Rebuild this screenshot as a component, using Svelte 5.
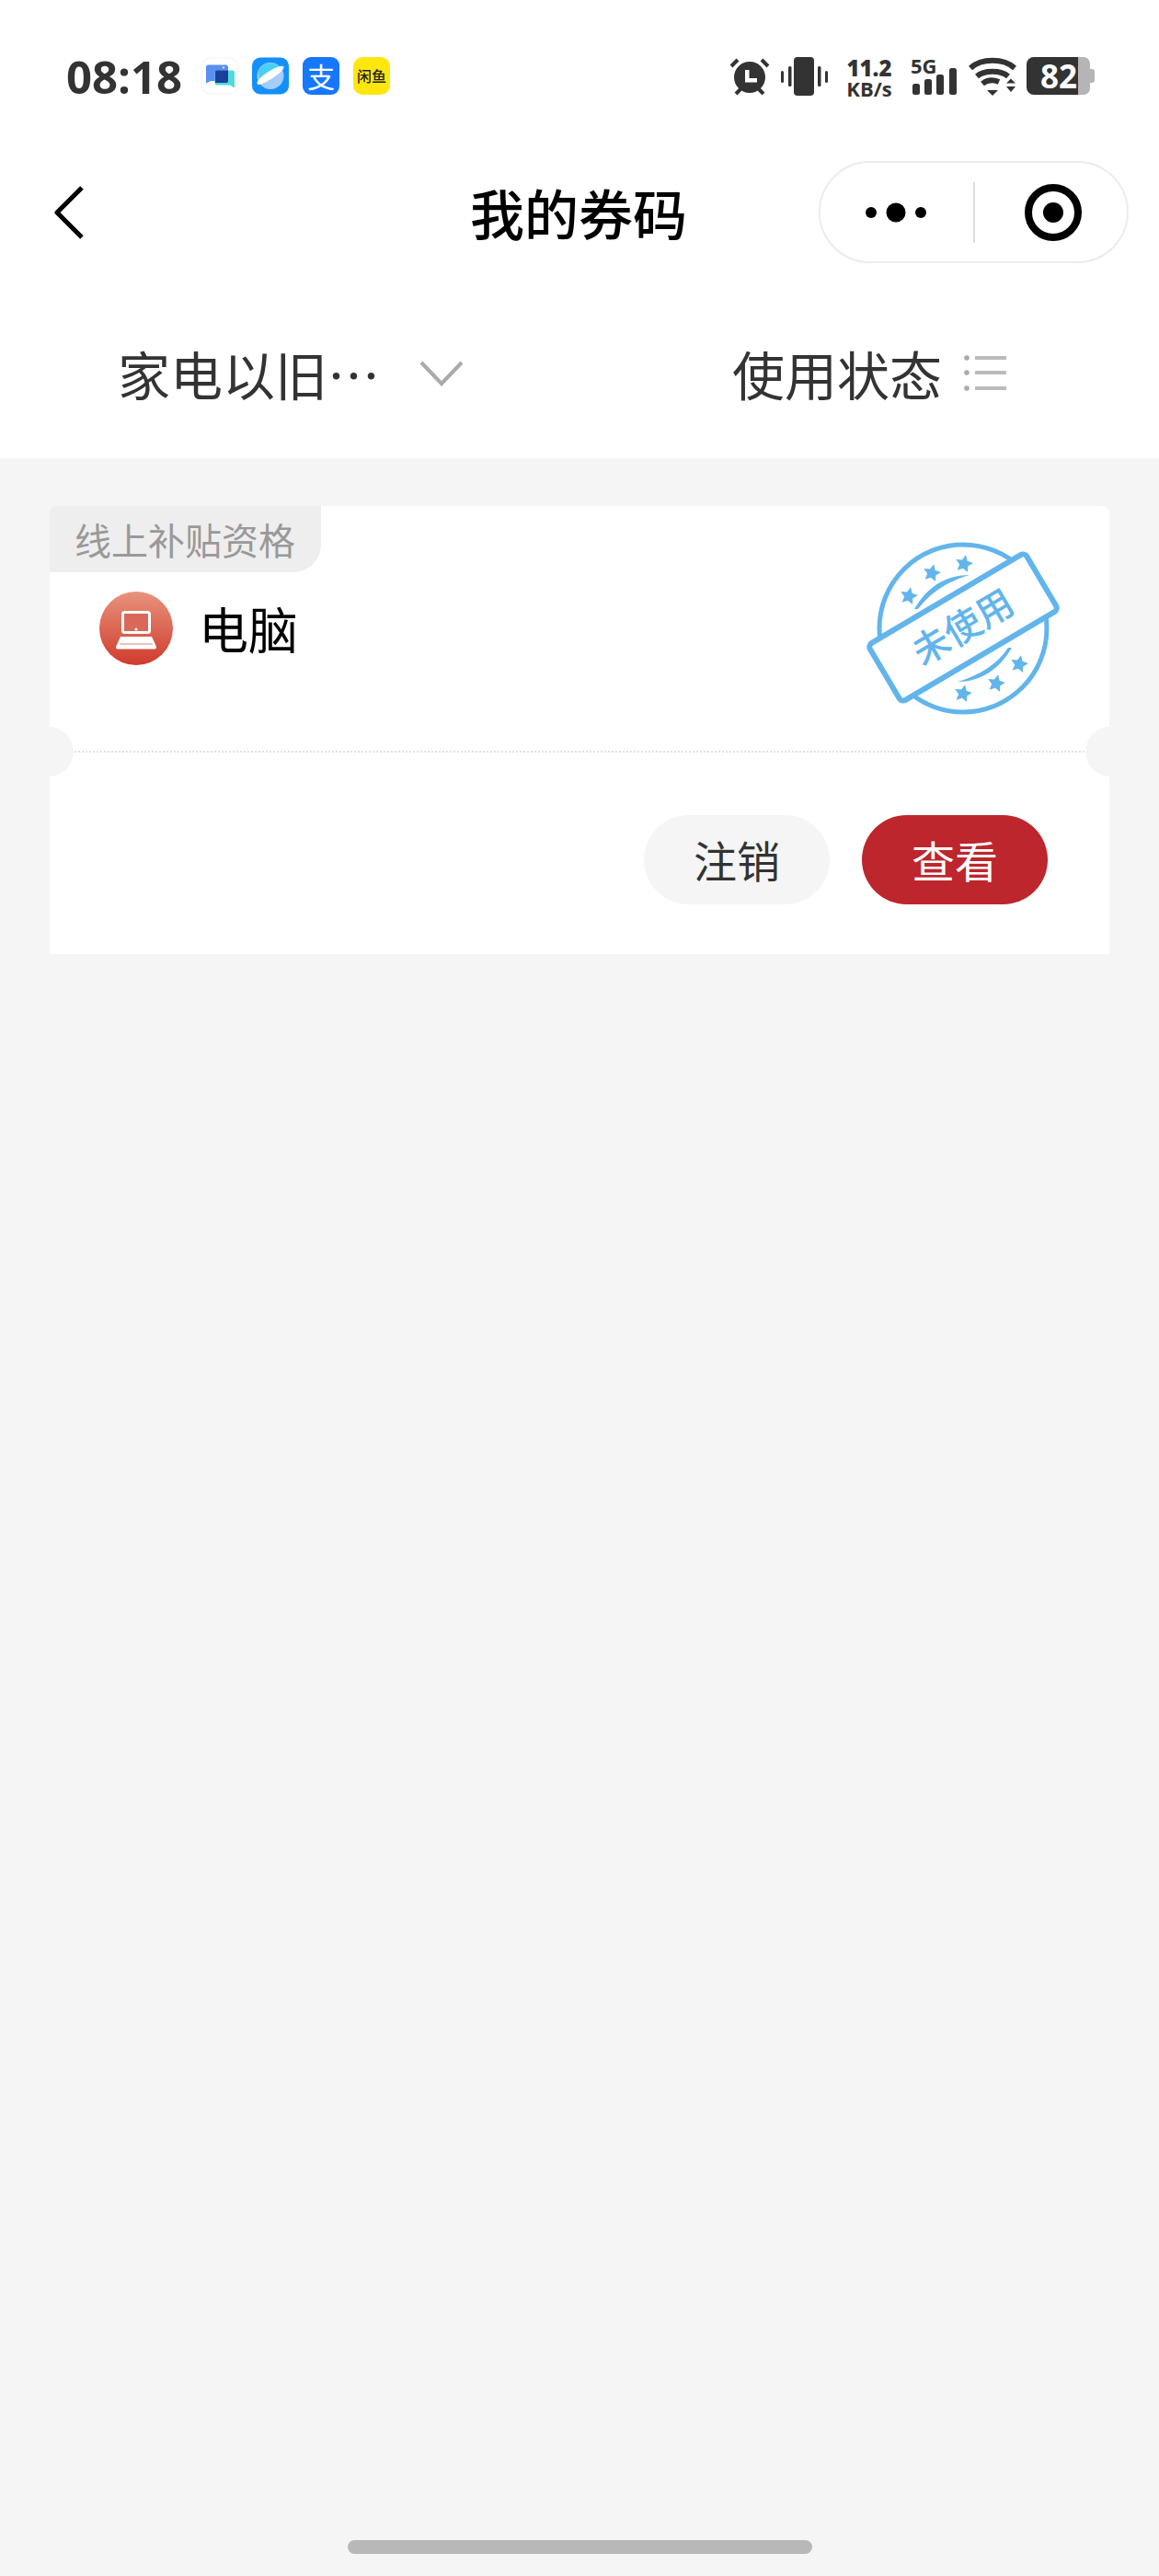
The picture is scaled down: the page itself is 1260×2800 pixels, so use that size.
<script>
	const stars = [
		[88, 78],
		[113, 53],
		[148, 43],
		[208, 152],
		[183, 173],
		[147, 184]
	];

	function starPoints(cx, cy, r) {
		const pts = [];
		for (let i = 0; i < 10; i++) {
			const radius = i % 2 === 0 ? r : r * 0.48;
			const a = (-90 + i * 36 + 12) * (Math.PI / 180);
			pts.push(`${(cx + radius * Math.cos(a)).toFixed(1)},${(cy + radius * Math.sin(a)).toFixed(1)}`);
		}
		return pts.join(' ');
	}
</script>

<div class="page">
	<header class="top">
		<div class="status">
			<span class="time">08:18</span>
			<div class="apps">
				<svg class="app" viewBox="0 0 40 40">
					<rect x="0.5" y="0.5" width="39" height="39" rx="9" fill="#fff" stroke="#f3f3f3" />
					<path d="M5 10.500A2.500 2.500 0 0 1 7.500 8h19A2.500 2.500 0 0 1 29 10.500V23a2.500 2.500 0 0 1-2.500 2.500H10L5 28z" fill="#5b8ff2" />
					<path d="M17 14h16.500a2.500 2.500 0 0 1 2.500 2.500V33l-5-3H17a2.500 2.500 0 0 1-2.500-2.500v-11A2.500 2.500 0 0 1 17 14z" fill="#4fdcd8" />
					<path d="M16.500 14H29v11.500a2 2 0 0 1-2 2H15V15.500A1.500 1.500 0 0 1 16.500 14z" fill="#1c3f9e" />
					<circle cx="24" cy="11" r="1" fill="#fff" />
				</svg>
				<svg class="app" viewBox="0 0 40 40">
					<rect width="40" height="40" rx="9" fill="#1490fb" />
					<circle cx="20" cy="20" r="14.500" fill="#a4cdfb" />
					<path d="M7 15a14.500 14.500 0 0 1 23-5l-20 15a14 14 0 0 1-3-10z" fill="#48d0f4" />
					<path d="M5.500 28.500c-1-2.500 5-8.500 13-13.500s15-7 16-5c.8 2-5 8-13 13s-15 8-16 5.500z" fill="#fff" />
				</svg>
				<div class="app alipay">支</div>
				<div class="app xianyu">闲鱼</div>
			</div>
			<div class="sys">
				<svg class="alarm" viewBox="0 0 44 42">
					<circle cx="22" cy="22" r="17" fill="#333" />
					<path d="M17 15h4.500v9H30v4.500H17z" fill="#fff" transform="translate(0 -1)" />
					<path d="M2 10 9 3M42 10 35 3" stroke="#333" stroke-width="4" />
					<path d="M7 40l6-6M37 40l-6-6" stroke="#333" stroke-width="4" />
				</svg>
				<svg class="vibrate" viewBox="0 0 51 42">
					<rect x="14" y="0" width="22" height="42" rx="4" fill="#333" />
					<rect x="0" y="15" width="3" height="13" rx="1.500" fill="#333" />
					<rect x="8" y="10" width="3.500" height="22" rx="1.500" fill="#333" />
					<rect x="40" y="10" width="3.500" height="22" rx="1.500" fill="#333" />
					<rect x="48" y="15" width="3" height="13" rx="1.500" fill="#333" />
				</svg>
				<div class="speed"><b>11.2</b><span>KB/s</span></div>
				<div class="signal">
					<span class="five-g">5G</span>
					<svg class="bars" viewBox="0 0 50 30">
						<rect x="2" y="17" width="8" height="12" rx="2.500" fill="#333" />
						<rect x="15" y="12" width="8" height="17" rx="2.500" fill="#333" />
						<rect x="28" y="7" width="8" height="22" rx="2.500" fill="#333" />
						<rect x="42" y="0" width="8" height="29" rx="2.500" fill="#333" />
					</svg>
				</div>
				<svg class="wifi" viewBox="0 0 52 42">
					<path d="M2 12C14 1 38 1 50 12" fill="none" stroke="#333" stroke-width="6" />
					<path d="M9 21c8-7 26-7 34 0" fill="none" stroke="#333" stroke-width="6" />
					<path d="M15 29c5-4 12-4.500 18-2" fill="none" stroke="#333" stroke-width="6" />
					<path d="M20 36h12l-6 6z" fill="#333" />
					<path d="M41 28.500l5-5 5 5zM41 32h10l-5 6z" fill="#333" />
				</svg>
				<div class="battery">
					<span class="level">82</span>
					<span class="rest"></span>
					<span class="nib"></span>
				</div>
			</div>
		</div>

		<nav class="nav">
			<svg class="back" viewBox="0 0 36 60">
				<path d="M32 3 5 30l27 27" fill="none" stroke="#000" stroke-width="5" stroke-linejoin="round" />
			</svg>
			<h1>我的券码</h1>
			<div class="capsule">
				<svg class="more" viewBox="0 0 70 24">
					<circle cx="6" cy="12" r="6" fill="#000" />
					<circle cx="33" cy="12" r="10.500" fill="#000" />
					<circle cx="60" cy="12" r="6" fill="#000" />
				</svg>
				<span class="sep"></span>
				<svg class="target" viewBox="0 0 62 62">
					<circle cx="31" cy="31" r="27" fill="none" stroke="#000" stroke-width="8" />
					<circle cx="31" cy="31" r="11" fill="#000" />
				</svg>
			</div>
		</nav>

		<div class="filters">
			<div class="filter">
				<span>家电以旧…</span>
				<svg class="chev" viewBox="0 0 48 28">
					<path d="M2 2 24 25 46 2" fill="none" stroke="#aaa" stroke-width="4" />
				</svg>
			</div>
			<div class="filter">
				<span>使用状态</span>
				<svg class="list" viewBox="0 0 46 40">
					<circle cx="3" cy="4" r="2.800" fill="#aaa" />
					<circle cx="3" cy="20" r="2.800" fill="#aaa" />
					<circle cx="3" cy="37" r="2.800" fill="#aaa" />
					<path d="M12 4h34M12 20h34M12 37h34" stroke="#bbb" stroke-width="4" />
				</svg>
			</div>
		</div>
	</header>

	<main class="main">
		<section class="card">
			<div class="upper">
				<div class="tag">线上补贴资格</div>
				<div class="item">
					<svg class="laptop" viewBox="0 0 80 80">
						<defs>
							<linearGradient id="red" x1="0" y1="0" x2="0" y2="1">
								<stop offset="0" stop-color="#e8937c" />
								<stop offset="1" stop-color="#cf3b2d" />
							</linearGradient>
						</defs>
						<circle cx="40" cy="40" r="40" fill="url(#red)" />
						<rect x="25.500" y="22.500" width="29" height="22" rx="2" fill="#d9685a" stroke="#fff" stroke-width="3" />
						<circle cx="40" cy="41" r="1.500" fill="#fff" />
						<path d="M23 49h34l5 11a2 2 0 0 1-2 2.500H20a2 2 0 0 1-2-2.500z" fill="#fff" />
						<path d="M22 57h36" stroke="#e5b0a6" stroke-width="1.500" />
					</svg>
					<span class="name">电脑</span>
				</div>
				<svg class="stamp" viewBox="0 0 300 230">
					<circle cx="147" cy="113" r="91" fill="none" stroke="#62b5ec" stroke-width="5" />
					{#each stars as s}
						<polygon points={starPoints(s[0], s[1], 10)} fill="#62b5ec" />
					{/each}
					<path d="M94 92C108 68 128 55 154 55C130 62 112 74 98 92z" fill="#62b5ec" />
					<path d="M200 134C186 158 166 171 141 171C165 164 184 152 196 134z" fill="#62b5ec" />
					<g transform="rotate(-30.600 147 112)">
						<rect x="48" y="76" width="198" height="72" rx="5" fill="#fff" stroke="#62b5ec" stroke-width="6" />
						<text x="147" y="126" text-anchor="middle" class="stamp-text">未使用</text>
					</g>
				</svg>
			</div>
			<div class="actions">
				<button class="btn ghost">注销</button>
				<button class="btn primary">查看</button>
			</div>
			<span class="notch left"></span>
			<span class="notch right"></span>
		</section>
	</main>

	<div class="home-wrap"><span class="home"></span></div>
</div>

<style>
	:global(body) {
		margin: 0;
		background: #f5f5f5;
	}

	.page {
		display: flex;
		flex-direction: column;
		min-height: 2800px;
		font-family: 'Noto Sans CJK SC', 'Liberation Sans', sans-serif;
		color: #333;
	}

	.top {
		background: #fff;
		height: 498px;
	}

	.status {
		display: flex;
		height: 175px;
		box-sizing: border-box;
		padding: 62px 70px 0 72px;
		justify-content: space-between;
	}

	.time {
		font-family: 'Open Sans', sans-serif;
		font-weight: 700;
		font-size: 49px;
		line-height: 42px;
		width: 147px;
		color: #333;
	}

	.apps {
		display: flex;
		gap: 15px;
		height: 41px;
	}

	.app {
		width: 40px;
		height: 41px;
	}

	.alipay {
		background: #1677ff;
		border-radius: 9px;
		color: #fff;
		font-size: 30px;
		line-height: 41px;
		text-align: center;
	}

	.xianyu {
		background: #ffe60f;
		border-radius: 10px;
		color: #222;
		font-size: 16px;
		font-weight: 500;
		line-height: 41px;
		text-align: center;
	}

	.sys {
		display: flex;
		align-items: flex-start;
		margin-left: auto;
		height: 42px;
	}

	.alarm {
		width: 44px;
		height: 42px;
	}

	.vibrate {
		width: 51px;
		height: 42px;
		margin-left: 12px;
	}

	.speed {
		width: 52px;
		margin-left: 19px;
		display: flex;
		flex-direction: column;
		align-items: center;
		font-family: 'Open Sans', sans-serif;
		font-weight: 700;
		color: #333;
	}

	.speed b {
		font-size: 24px;
		line-height: 24px;
	}

	.speed span {
		font-size: 22px;
		line-height: 20px;
		white-space: nowrap;
	}

	.signal {
		position: relative;
		width: 50px;
		height: 42px;
		margin-left: 19px;
	}

	.five-g {
		position: absolute;
		left: 0;
		top: -1px;
		font-family: 'Open Sans', sans-serif;
		font-weight: 700;
		font-size: 22px;
		line-height: 20px;
		color: #333;
	}

	.bars {
		position: absolute;
		left: 0;
		top: 12px;
		width: 50px;
		height: 30px;
	}

	.wifi {
		width: 52px;
		height: 42px;
		margin-left: 13px;
	}

	.battery {
		display: flex;
		align-items: center;
		margin-left: 11px;
		height: 41px;
	}

	.level {
		width: 56px;
		height: 41px;
		background: #333;
		border-radius: 8px 0 0 8px;
		color: #fff;
		font-family: 'Open Sans', sans-serif;
		font-weight: 700;
		font-size: 35px;
		line-height: 41px;
		text-align: right;
		box-sizing: border-box;
		padding-right: 1px;
	}

	.rest {
		width: 13px;
		height: 41px;
		background: #b5b5b5;
		border-radius: 0 7px 7px 0;
	}

	.nib {
		width: 5px;
		height: 15px;
		background: #b5b5b5;
		border-radius: 0 3px 3px 0;
	}

	.nav {
		display: grid;
		grid-template-columns: 454px auto 1fr;
		align-items: center;
		height: 111px;
		padding: 0 33px 0 57px;
	}

	.back {
		width: 36px;
		height: 60px;
	}

	h1 {
		margin: 0;
		font-size: 59px;
		font-weight: 500;
		line-height: 64px;
		color: #000;
	}

	.capsule {
		justify-self: end;
		display: flex;
		align-items: center;
		box-sizing: border-box;
		width: 337px;
		height: 111px;
		border: 2px solid #ececec;
		border-radius: 56px;
	}

	.more {
		width: 70px;
		height: 24px;
		margin-left: 49px;
	}

	.sep {
		width: 2px;
		height: 66px;
		background: #ddd;
		margin-left: 47px;
	}

	.target {
		width: 62px;
		height: 62px;
		margin-left: 54px;
	}

	.filters {
		display: grid;
		grid-template-columns: 668px auto;
		align-items: center;
		box-sizing: border-box;
		height: 212px;
		padding: 25px 0 0 128px;
		font-size: 57px;
		color: #333;
	}

	.filter {
		display: flex;
		align-items: center;
		line-height: 64px;
	}

	.chev {
		width: 48px;
		height: 28px;
		margin: 2px 0 0 43px;
	}

	.list {
		width: 46px;
		height: 40px;
		margin-left: 24px;
	}

	.main {
		flex: 1;
		padding: 52px 54px 0;
		background: #f5f5f5;
	}

	.card {
		position: relative;
		overflow: hidden;
		background: #fff;
		border-radius: 8px 8px 0 0;
	}

	.upper {
		position: relative;
		box-sizing: border-box;
		height: 268px;
		border-bottom: 2px dotted #e2e2e2;
	}

	.tag {
		width: 295px;
		height: 72px;
		box-sizing: border-box;
		padding-left: 27px;
		background: #eeeeee;
		border-bottom-right-radius: 30px;
		color: #999;
		font-size: 40px;
		line-height: 72px;
	}

	.item {
		display: flex;
		align-items: center;
		gap: 28px;
		margin: 21px 0 0 54px;
	}

	.laptop {
		width: 80px;
		height: 80px;
	}

	.name {
		font-size: 54px;
		line-height: 56px;
		color: #000;
	}

	.stamp {
		position: absolute;
		left: 846px;
		top: 20px;
		width: 300px;
		height: 230px;
	}

	.stamp-text {
		font-family: 'Noto Sans CJK SC', sans-serif;
		font-size: 40px;
		font-weight: 500;
		fill: #62b5ec;
	}

	.actions {
		display: flex;
		justify-content: flex-end;
		gap: 35px;
		padding: 68px 67px 54px 0;
	}

	.btn {
		width: 202px;
		height: 97px;
		border: 0;
		border-radius: 49px;
		padding: 0 0 3px;
		font-family: inherit;
		font-size: 47px;
	}

	.ghost {
		background: #f5f5f5;
		color: #333;
	}

	.primary {
		background: #bd262c;
		color: #fff;
	}

	.notch {
		position: absolute;
		top: 240px;
		width: 54px;
		height: 54px;
		border-radius: 50%;
		background: #f5f5f5;
	}

	.notch.left {
		left: -28px;
	}

	.notch.right {
		right: -28px;
	}

	.home-wrap {
		display: flex;
		justify-content: center;
		padding-bottom: 24px;
		background: #f5f5f5;
	}

	.home {
		width: 505px;
		height: 15px;
		border-radius: 8px;
		background: #b8b8b8;
	}
</style>
